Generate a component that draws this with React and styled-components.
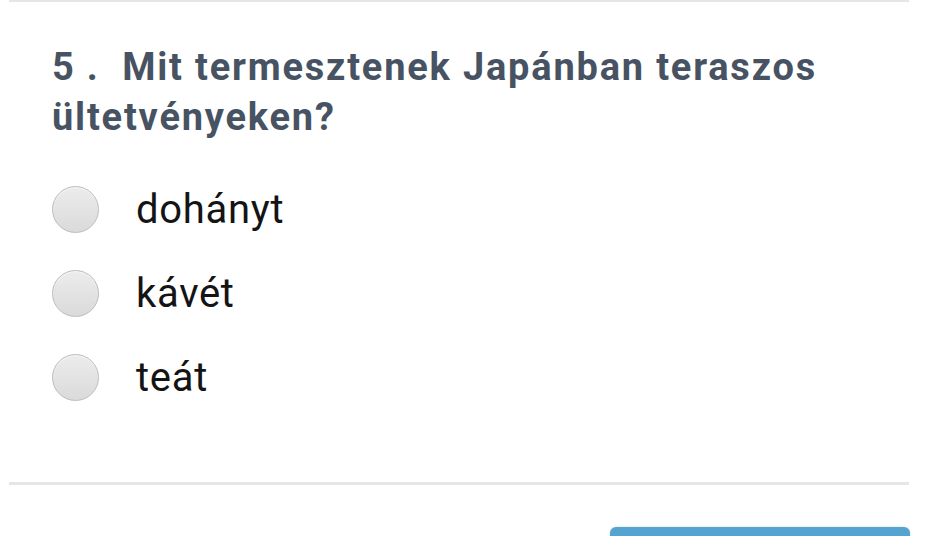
import React from 'react'
import styled, { createGlobalStyle } from 'styled-components'

const GlobalStyle = createGlobalStyle`
    html, body {
        margin: 0;
        padding: 0;
        background: #fff;
        overflow: hidden;
    }
    body {
        font-family: Roboto, "Liberation Sans", Arial, sans-serif;
    }
`

const Page = styled.div`
    width: 938px;
    height: 536px;
    padding: 0 29px 0 9px;
    box-sizing: border-box;
    overflow: hidden;
`

const Question = styled.section`
    border-top: 2px solid #e6e6e6;
    border-bottom: 3px solid #e6e6e6;
    padding: 40px 0 63px 43px;
`

const Title = styled.h2`
    margin: 0 0 25px;
    font-size: 38px;
    line-height: 50px;
    font-weight: 700;
    letter-spacing: 1.8px;
    color: #475362;
    max-width: 820px;
`

const Options = styled.div`
    display: flex;
    flex-direction: column;
`

const Option = styled.label`
    display: flex;
    align-items: center;
    height: 84px;
    gap: 37px;
    cursor: pointer;
`

const Radio = styled.span`
    width: 45px;
    height: 45px;
    flex: none;
    border-radius: 50%;
    border: 1px solid #bcbcbc;
    background: linear-gradient(#ececec, #dadada);
    box-shadow: inset 0 1px 1px rgba(255, 255, 255, 0.6);
`

const OptionText = styled.span`
    font-size: 40px;
    letter-spacing: 0.7px;
    color: #141414;
`

const Footer = styled.div`
    display: flex;
    justify-content: flex-end;
    padding-top: 42px;
`

const NextButton = styled.button`
    width: 300px;
    height: 60px;
    border: none;
    border-radius: 6px;
    background: #55a3d0;
    box-shadow: 0 0 3px rgba(0, 0, 0, 0.15);
    margin-right: -1px;
`

const answers = ['dohányt', 'kávét', 'teát']

export default function App() {
    return (
        <Page>
            <GlobalStyle />
            <Question>
                <Title>5 .&nbsp; Mit termesztenek Japánban teraszos ültetvényeken?</Title>
                <Options>
                    {answers.map((a) => (
                        <Option key={a}>
                            <Radio />
                            <OptionText>{a}</OptionText>
                        </Option>
                    ))}
                </Options>
            </Question>
            <Footer>
                <NextButton />
            </Footer>
        </Page>
    )
}
